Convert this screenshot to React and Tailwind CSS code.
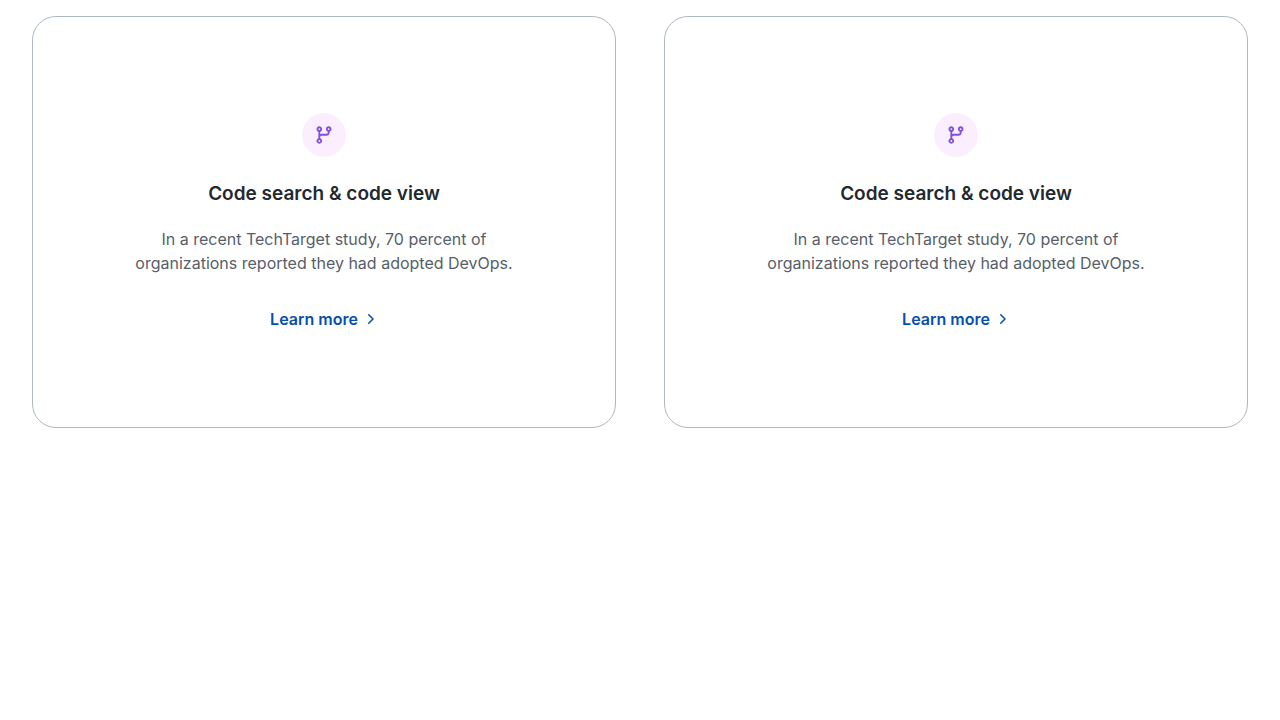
function BranchIcon() {
  return (
    <svg viewBox="0 0 16 16" className="size-5" fill="currentColor" aria-hidden="true">
      <path d="M9.5 3.25a2.25 2.25 0 1 1 3 2.122V6A2.5 2.5 0 0 1 10 8.5H6a1 1 0 0 0-1 1v1.128a2.251 2.251 0 1 1-1.5 0V5.372a2.25 2.25 0 1 1 1.5 0v1.836A2.493 2.493 0 0 1 6 7h4a1 1 0 0 0 1-1v-.628A2.25 2.25 0 0 1 9.5 3.25Zm-6 0a.75.75 0 1 0 1.5 0 .75.75 0 0 0-1.5 0Zm8.25-.75a.75.75 0 1 0 0 1.5.75.75 0 0 0 0-1.5ZM4.25 12a.75.75 0 1 0 0 1.5.75.75 0 0 0 0-1.5Z" />
    </svg>
  );
}

function ChevronIcon() {
  return (
    <svg viewBox="0 0 16 16" className="size-4" fill="currentColor" aria-hidden="true">
      <path d="M6.22 3.22a.75.75 0 0 1 1.06 0l4.25 4.25a.75.75 0 0 1 0 1.06l-4.25 4.25a.75.75 0 0 1-1.06-1.06L9.94 8 6.22 4.28a.75.75 0 0 1 0-1.06Z" />
    </svg>
  );
}

function Card({ title, description }) {
  return (
    <article className="flex flex-col items-center rounded-3xl border border-[#afb8c1] p-24 text-center">
      <span className="flex size-11 items-center justify-center rounded-full bg-[#fbefff] text-[#8250df]">
        <BranchIcon />
      </span>
      <h3 className="mt-6 text-[19px] leading-[26px] font-semibold text-[#24292f]">{title}</h3>
      <p className="mt-5 text-base leading-6 text-[#57606a]">{description}</p>
      <a href="#" className="mt-8 flex items-center gap-1 text-base leading-6 font-semibold text-[#0550ae]">
        Learn more
        <ChevronIcon />
      </a>
    </article>
  );
}

const cards = [1, 2].map((id) => ({
  id,
  title: "Code search & code view",
  description: "In a recent TechTarget study, 70 percent of organizations reported they had adopted DevOps.",
}));

export default function App() {
  return (
    <main className="grid grid-cols-2 gap-12 bg-white px-8 py-4 font-['Inter',sans-serif]">
      {cards.map((card) => (
        <Card key={card.id} title={card.title} description={card.description} />
      ))}
    </main>
  );
}
